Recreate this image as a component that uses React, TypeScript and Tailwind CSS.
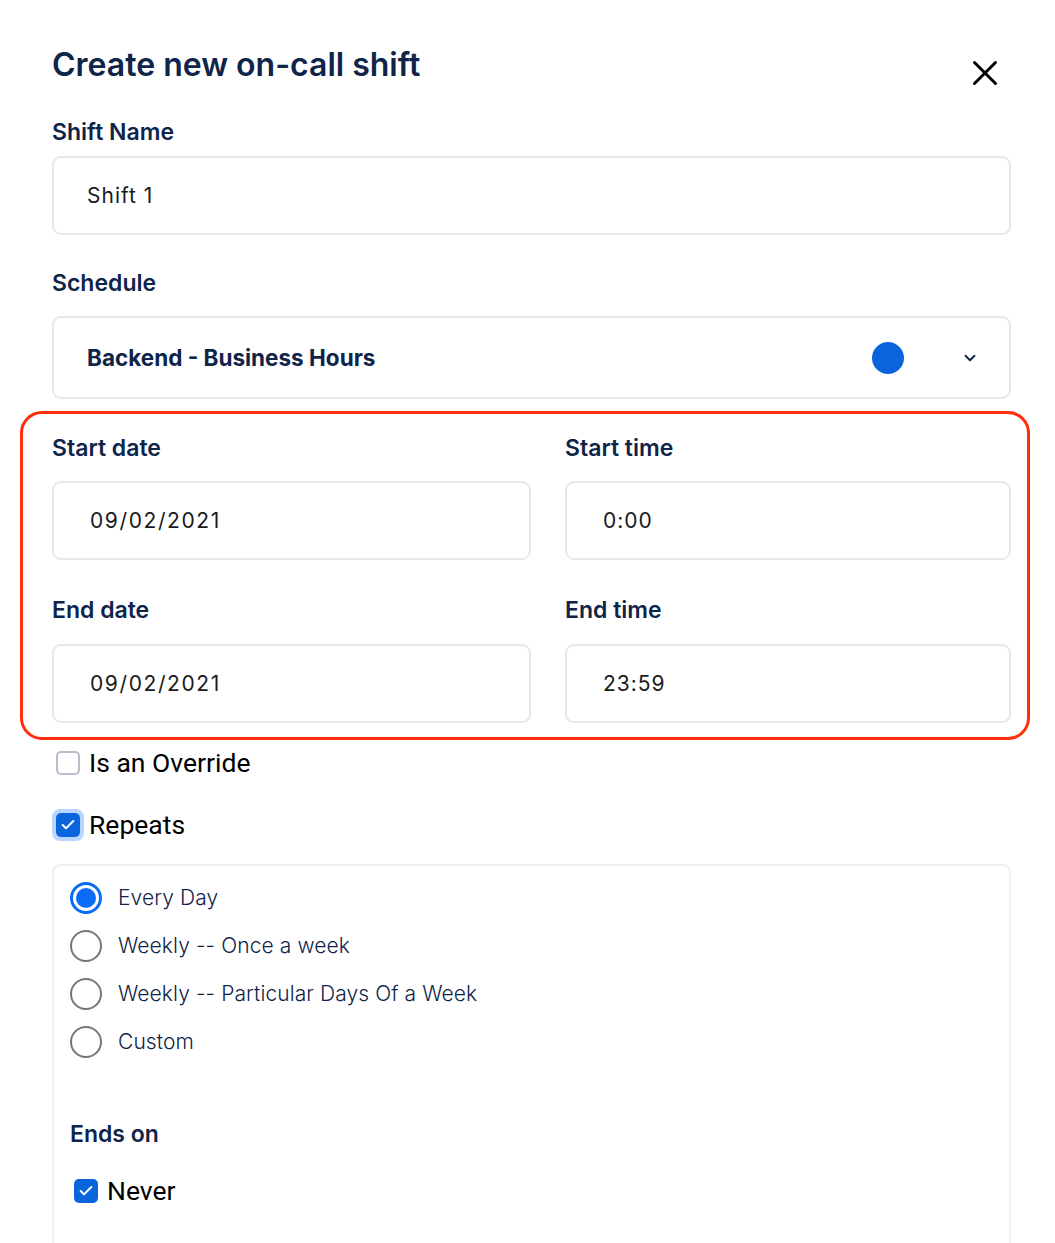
import { X, ChevronDown, Check } from "lucide-react"

const navy = "text-[#0f2449]"

function Label({ children }: { children: React.ReactNode }) {
  return <div className={`text-[23px] font-semibold ${navy} leading-[26px]`}>{children}</div>
}

function Field({ value, pad = "pl-[36px]", track = "tracking-[1px]" }: { value: string; pad?: string; track?: string }) {
  return (
    <div className={`h-[79px] border-2 border-[#e6e8f0] rounded-[9px] flex items-center ${pad} text-[21px] text-[#1a1a1a] ${track}`}>
      {value}
    </div>
  )
}

function Radio({ label, checked }: { label: string; checked?: boolean }) {
  return (
    <div className="flex items-center h-[48px]">
      {checked ? (
        <div className="w-[32px] h-[32px] rounded-full border-[3px] border-[#0a6cf5] flex items-center justify-center">
          <div className="w-[20px] h-[20px] rounded-full bg-[#0a6cf5]" />
        </div>
      ) : (
        <div className="w-[32px] h-[32px] rounded-full border-2 border-[#767676]" />
      )}
      <span className={`ml-[16px] text-[21px] ${navy} font-light tracking-[0.1px]`}>{label}</span>
    </div>
  )
}

export default function App() {
  return (
    <div className="w-[1055px] h-[1243px] bg-white overflow-hidden font-['Inter',sans-serif]">
      <div className="pl-[52px] pr-[44px] pt-[45px]">
        <div className="flex justify-between items-start">
          <h1 className={`text-[32px] font-semibold ${navy} leading-[40px]`}>Create new on-call shift</h1>
          <X className="w-[42px] h-[42px] mt-[7px] mr-[5px] text-black" strokeWidth={1.7} />
        </div>
        <div className="w-[959px]">
          <div className="mt-[25px]"><Label>Shift Name</Label></div>
          <div className="mt-[11px]"><Field value="Shift 1" pad="pl-[33px]" /></div>
          <div className="mt-[35px]"><Label>Schedule</Label></div>
          <div className="mt-[20px] h-[83px] border-2 border-[#e6e8f0] rounded-[9px] flex items-center pl-[33px] pr-[30px]">
            <span className={`text-[22.5px] font-bold ${navy}`}>Backend - Business Hours</span>
            <div className="ml-auto w-[32px] h-[32px] rounded-full bg-[#0a64dc]" />
            <ChevronDown className={`ml-[57px] w-[18px] h-[18px] ${navy}`} strokeWidth={2.5} />
          </div>
        </div>
      </div>

      <div className="mx-[20px] mt-[12px] w-[1010px] border-[3px] border-[#ff2d0a] rounded-[22px] pl-[29px] pr-[16px] pt-[21px] pb-[14px]">
        <div className="grid grid-cols-[479px_446px] gap-x-[34px]">
          <div>
            <Label>Start date</Label>
            <div className="mt-[20px]"><Field value="09/02/2021" track="tracking-[1.6px]" /></div>
          </div>
          <div>
            <Label>Start time</Label>
            <div className="mt-[20px]"><Field value="0:00" /></div>
          </div>
          <div className="mt-[37px]">
            <Label>End date</Label>
            <div className="mt-[21px]"><Field value="09/02/2021" track="tracking-[1.6px]" /></div>
          </div>
          <div className="mt-[37px]">
            <Label>End time</Label>
            <div className="mt-[21px]"><Field value="23:59" /></div>
          </div>
        </div>
      </div>

      <div className="pl-[52px] font-['Roboto',sans-serif]">
        <div className="flex items-center h-[46px]">
          <div className="ml-[4px] w-[24px] h-[24px] rounded-[5px] border-2 border-[#b8bccb] bg-white" />
          <span className="ml-[9px] text-[26.5px] text-black">Is an Override</span>
        </div>
        <div className="flex items-center h-[50px] mt-[14px]">
          <div className="w-[32px] h-[32px] rounded-[8px] bg-[#b9d6ff] flex items-center justify-center">
            <div className="w-[24px] h-[24px] rounded-[5px] bg-[#0a64dc] flex items-center justify-center">
              <Check className="w-[16px] h-[16px] text-white" strokeWidth={3} />
            </div>
          </div>
          <span className="ml-[5px] text-[26.5px] text-black">Repeats</span>
        </div>

        <div className="mt-[14px] w-[959px] h-[400px] border-2 border-[#f0f0f2] rounded-[8px] pl-[16px] pt-[8px] font-['Inter',sans-serif]">
          <Radio label="Every Day" checked />
          <Radio label="Weekly -- Once a week" />
          <Radio label="Weekly -- Particular Days Of a Week" />
          <Radio label="Custom" />
          <div className="mt-[55px]"><Label>Ends on</Label></div>
          <div className="flex items-center mt-[24px] pl-[4px] font-['Roboto',sans-serif]">
            <div className="w-[24px] h-[24px] rounded-[5px] bg-[#0a64dc] flex items-center justify-center">
              <Check className="w-[16px] h-[16px] text-white" strokeWidth={3} />
            </div>
            <span className="ml-[9px] text-[26.5px] text-black">Never</span>
          </div>
        </div>
      </div>
    </div>
  )
}
